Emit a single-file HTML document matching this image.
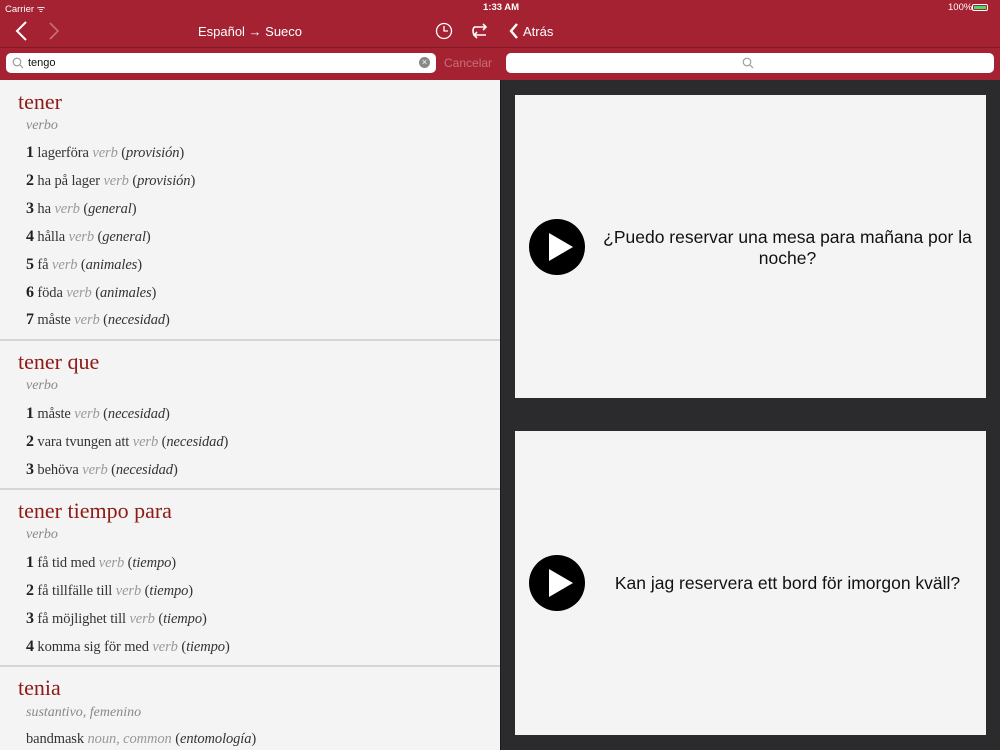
<!DOCTYPE html>
<html><head><meta charset="utf-8"><style>
*{margin:0;padding:0;box-sizing:border-box}
body{width:1000px;height:750px;overflow:hidden;position:relative;background:#f4f4f4;font-family:"Liberation Sans",sans-serif}
.hdr{position:absolute;left:0;top:0;width:1000px;height:80px;background:#a42232}
.sb{position:absolute;top:2px;font-size:9.5px;color:#fff}
.line{position:absolute;top:47px;left:0;width:1000px;height:1px;background:#7f1a26}
.search{position:absolute;top:53px;height:20px;background:#fff;border-radius:5px}
.left{position:absolute;left:0;top:80px;width:500px;height:670px;background:#f4f4f4;font-family:"Liberation Serif",serif;overflow:hidden}
.t{position:absolute;white-space:nowrap}
.hw{left:18px;font-size:22px;color:#8e1a14}
.pos{left:26px;font-size:14px;font-style:italic;color:#888}
.d{left:26px;font-size:14.5px;color:#333;letter-spacing:-0.1px}
.d b{color:#222;font-size:16px}
.d i{color:#999}
.d em{color:#333;font-style:italic}
.sep{position:absolute;left:0;width:500px;height:2px;background:#d6d6d6}
.right{position:absolute;left:500px;top:80px;width:500px;height:670px;background:#2b2b2d;border-left:1px solid #1a1a1a}
.card{position:absolute;left:14px;width:471px;background:#f4f4f4}
.play{position:absolute;left:14px;width:56px;height:56px;border-radius:50%;background:#000}
.play:after{content:"";position:absolute;left:20px;top:14px;border-left:24px solid #fff;border-top:14px solid transparent;border-bottom:14px solid transparent}
.ct{position:absolute;left:85px;width:375px;text-align:center;font-size:17.5px;color:#111;line-height:21px}
</style></head><body>
<div class="hdr">
<div class="sb" style="left:5px">Carrier ᯤ</div>
<div class="sb" style="left:483px;font-weight:bold">1:33 AM</div>
<div class="sb" style="left:948px">100%</div>
<div style="position:absolute;left:972px;top:4px;width:16px;height:7px;border:1px solid #fff;border-radius:2px;padding:1px"><div style="width:100%;height:100%;background:#4cd964"></div></div>
<svg style="position:absolute;left:12px;top:20px" width="60" height="22"><path d="M14 2 L5 11 L14 20" stroke="#fff" stroke-width="2" fill="none"/><path d="M38 3 L46 11 L38 19" stroke="#c9707a" stroke-width="1.6" fill="none"/></svg>
<div style="position:absolute;left:0;width:500px;top:24px;text-align:center;color:#fff;font-size:13px">Español → Sueco</div>
<svg style="position:absolute;left:434px;top:21px" width="60" height="20"><circle cx="10" cy="10" r="7.5" stroke="#fff" stroke-width="1.3" fill="none"/><path d="M10 5 V10 H14" stroke="#fff" stroke-width="1.3" fill="none"/><path d="M40 6 H52 M49 3 L52 6 L49 9 M52 14 H40 M43 11 L40 14 L43 17" stroke="#fff" stroke-width="1.6" fill="none"/><path d="M40 6 Q38 10 40 14" stroke="#fff" stroke-width="1.6" fill="none"/></svg>
<svg style="position:absolute;left:508px;top:22px" width="70" height="20"><path d="M9 2 L3 9 L9 16" stroke="#fff" stroke-width="2.4" fill="none"/></svg>
<div style="position:absolute;left:523px;top:24px;color:#fff;font-size:13px">Atrás</div>
<div class="line"></div>
<div class="search" style="left:6px;width:430px"><svg style="position:absolute;left:6px;top:4px" width="12" height="12"><circle cx="5" cy="5" r="3.8" stroke="#999" stroke-width="1.1" fill="none"/><path d="M8 8 L11 11" stroke="#999" stroke-width="1.2"/></svg><span style="position:absolute;left:22px;top:4px;font-size:11px;color:#111">tengo</span><div style="position:absolute;left:413px;top:4px;width:11px;height:11px;border-radius:50%;background:#888;color:#fff;font-size:9px;line-height:11px;text-align:center">×</div></div>
<div style="position:absolute;left:444px;top:56px;font-size:12px;color:#c8707b">Cancelar</div>
<div class="search" style="left:506px;width:488px"><svg style="position:absolute;left:236px;top:4px" width="12" height="12"><circle cx="5" cy="5" r="3.8" stroke="#999" stroke-width="1.1" fill="none"/><path d="M8 8 L11 11" stroke="#999" stroke-width="1.2"/></svg></div>
</div>
<div class="left">
<div class="t hw" style="top:9px">tener</div>
<div class="t pos" style="top:38px">verbo</div>
<div class="t d" style="top:64px"><b>1</b> lagerföra <i>verb</i> (<em>provisión</em>)</div>
<div class="t d" style="top:92px"><b>2</b> ha på lager <i>verb</i> (<em>provisión</em>)</div>
<div class="t d" style="top:120px"><b>3</b> ha <i>verb</i> (<em>general</em>)</div>
<div class="t d" style="top:148px"><b>4</b> hålla <i>verb</i> (<em>general</em>)</div>
<div class="t d" style="top:176px"><b>5</b> få <i>verb</i> (<em>animales</em>)</div>
<div class="t d" style="top:204px"><b>6</b> föda <i>verb</i> (<em>animales</em>)</div>
<div class="t d" style="top:231px"><b>7</b> måste <i>verb</i> (<em>necesidad</em>)</div>
<div class="sep" style="top:259px"></div>
<div class="t hw" style="top:269px">tener que</div>
<div class="t pos" style="top:298px">verbo</div>
<div class="t d" style="top:325px"><b>1</b> måste <i>verb</i> (<em>necesidad</em>)</div>
<div class="t d" style="top:353px"><b>2</b> vara tvungen att <i>verb</i> (<em>necesidad</em>)</div>
<div class="t d" style="top:381px"><b>3</b> behöva <i>verb</i> (<em>necesidad</em>)</div>
<div class="sep" style="top:408px"></div>
<div class="t hw" style="top:418px">tener tiempo para</div>
<div class="t pos" style="top:447px">verbo</div>
<div class="t d" style="top:474px"><b>1</b> få tid med <i>verb</i> (<em>tiempo</em>)</div>
<div class="t d" style="top:502px"><b>2</b> få tillfälle till <i>verb</i> (<em>tiempo</em>)</div>
<div class="t d" style="top:530px"><b>3</b> få möjlighet till <i>verb</i> (<em>tiempo</em>)</div>
<div class="t d" style="top:558px"><b>4</b> komma sig för med <i>verb</i> (<em>tiempo</em>)</div>
<div class="sep" style="top:585px"></div>
<div class="t hw" style="top:595px">tenia</div>
<div class="t pos" style="top:625px">sustantivo, femenino</div>
<div class="t d" style="top:651px">bandmask <i>noun, common</i> (<em>entomología</em>)</div>
</div>
<div class="right">
<div class="card" style="top:15px;height:303px"><div class="play" style="top:124px"></div><div class="ct" style="top:132px">¿Puedo reservar una mesa para mañana por la noche?</div></div>
<div class="card" style="top:351px;height:304px"><div class="play" style="top:124px"></div><div class="ct" style="top:142px">Kan jag reservera ett bord för imorgon kväll?</div></div>
</div>
</body></html>
